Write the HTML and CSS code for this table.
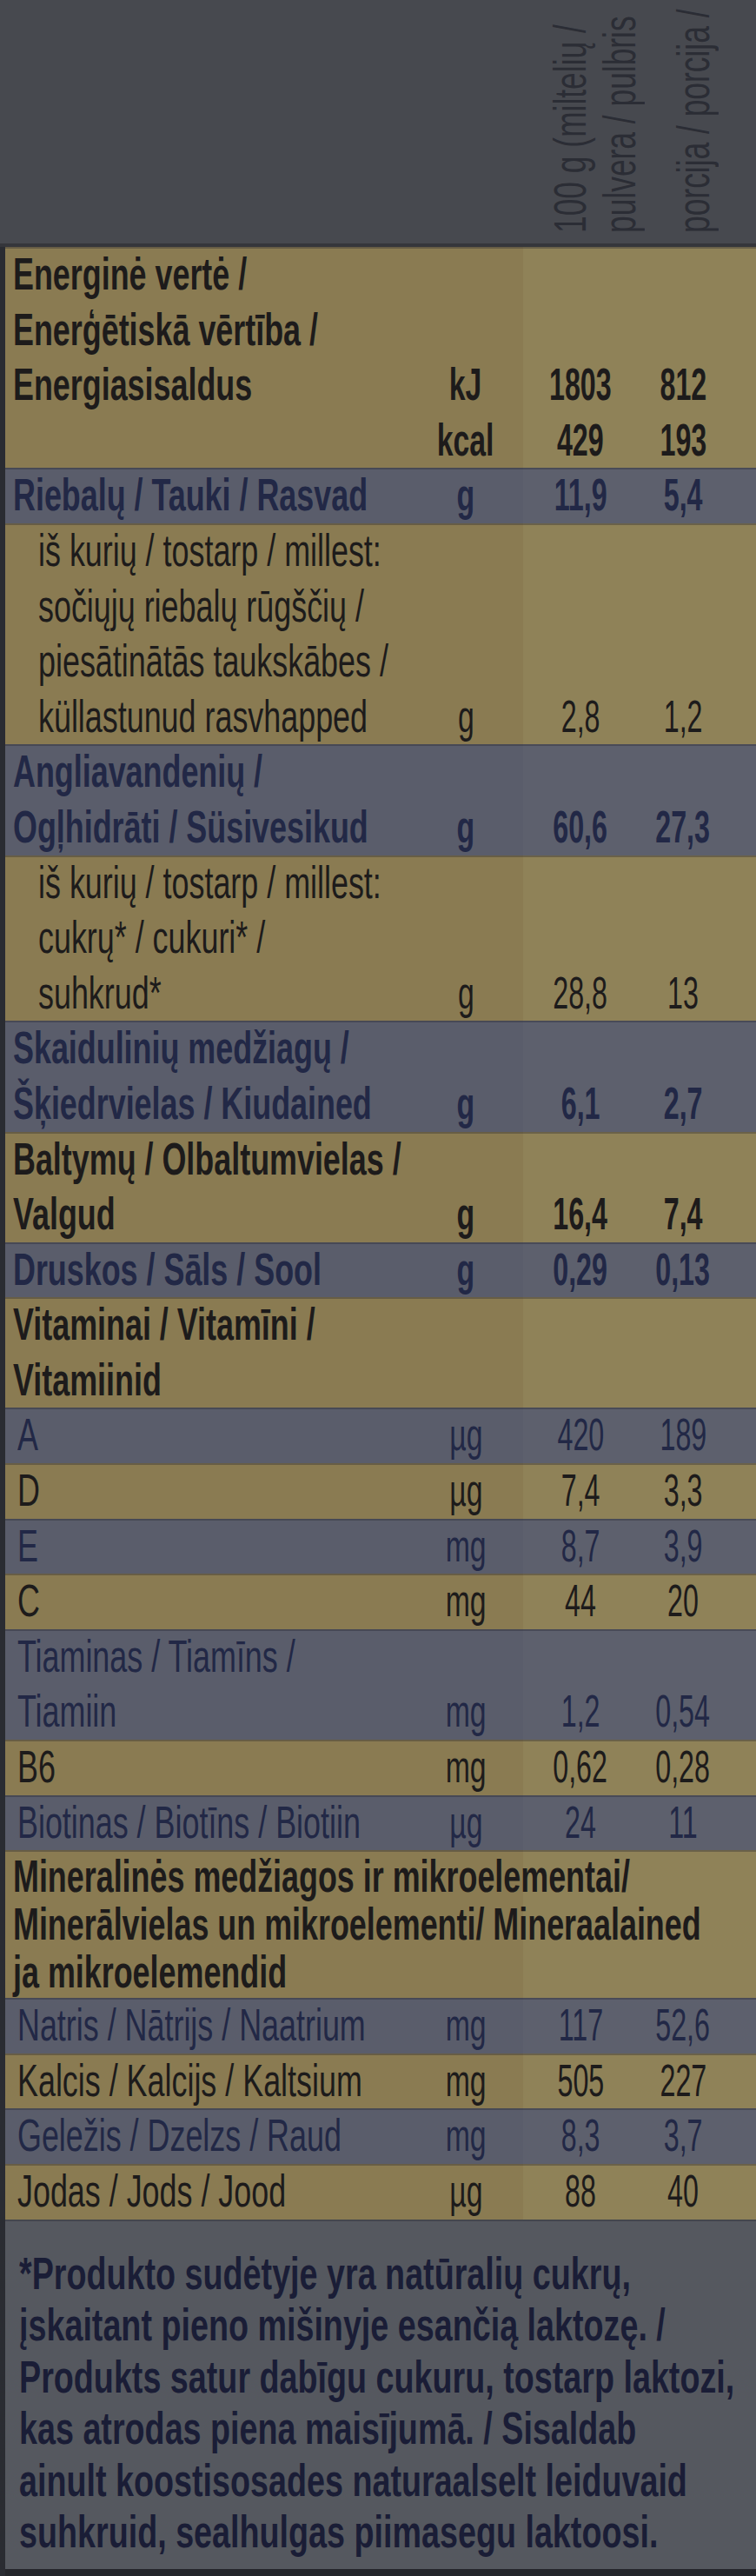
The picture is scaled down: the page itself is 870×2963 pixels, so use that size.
FILE: index.html
```html
<!DOCTYPE html>
<html lang="lt">
<head>
<meta charset="utf-8">
<title>Maistinė vertė</title>
<link rel="stylesheet" href="styles.css">
</head>
<body>
<div class="head">
  <div class="hcell hcell-1"><div class="vtext">100 g (miltelių /<br>pulvera / pulbris</div></div>
  <div class="hcell hcell-2"><div class="vtext">porcija / porcija /</div></div>
</div>
<div class="panel">
  <div class="row y bold">
    <div class="lbl pad1"><span class="t">Energinė vertė /<br>Enerģētiskā vērtība /<br>Energiasisaldus</span></div>
    <div class="u"><span class="t">kJ<br>kcal</span></div>
    <div class="v"><span class="n">1803<br>429</span></div>
    <div class="v"><span class="n">812<br>193</span></div>
  </div>
  <div class="row b bold">
    <div class="lbl"><span class="t">Riebalų / Tauki / Rasvad</span></div>
    <div class="u"><span class="t">g</span></div>
    <div class="v"><span class="n">11,9</span></div>
    <div class="v"><span class="n">5,4</span></div>
  </div>
  <div class="row y">
    <div class="lbl sub"><span class="t">iš kurių / tostarp / millest:<br>sočiųjų riebalų rūgščių /<br>piesātinātās taukskābes /<br>küllastunud rasvhapped</span></div>
    <div class="u"><span class="t">g</span></div>
    <div class="v"><span class="n">2,8</span></div>
    <div class="v"><span class="n">1,2</span></div>
  </div>
  <div class="row b bold">
    <div class="lbl"><span class="t">Angliavandenių /<br>Ogļhidrāti / Süsivesikud</span></div>
    <div class="u"><span class="t">g</span></div>
    <div class="v"><span class="n">60,6</span></div>
    <div class="v"><span class="n">27,3</span></div>
  </div>
  <div class="row y">
    <div class="lbl sub"><span class="t">iš kurių / tostarp / millest:<br>cukrų* / cukuri* /<br>suhkrud*</span></div>
    <div class="u"><span class="t">g</span></div>
    <div class="v"><span class="n">28,8</span></div>
    <div class="v"><span class="n">13</span></div>
  </div>
  <div class="row b bold">
    <div class="lbl"><span class="t">Skaidulinių medžiagų /<br>Šķiedrvielas / Kiudained</span></div>
    <div class="u"><span class="t">g</span></div>
    <div class="v"><span class="n">6,1</span></div>
    <div class="v"><span class="n">2,7</span></div>
  </div>
  <div class="row y bold">
    <div class="lbl"><span class="t">Baltymų / Olbaltumvielas /<br>Valgud</span></div>
    <div class="u"><span class="t">g</span></div>
    <div class="v"><span class="n">16,4</span></div>
    <div class="v"><span class="n">7,4</span></div>
  </div>
  <div class="row b bold">
    <div class="lbl"><span class="t">Druskos / Sāls / Sool</span></div>
    <div class="u"><span class="t">g</span></div>
    <div class="v"><span class="n">0,29</span></div>
    <div class="v"><span class="n">0,13</span></div>
  </div>
  <div class="row y bold">
    <div class="lbl"><span class="t">Vitaminai / Vitamīni /<br>Vitamiinid</span></div>
    <div class="u"></div>
    <div class="v"></div>
    <div class="v"></div>
  </div>
  <div class="row b">
    <div class="lbl"><span class="t">A</span></div>
    <div class="u"><span class="t">µg</span></div>
    <div class="v"><span class="n">420</span></div>
    <div class="v"><span class="n">189</span></div>
  </div>
  <div class="row y">
    <div class="lbl"><span class="t">D</span></div>
    <div class="u"><span class="t">µg</span></div>
    <div class="v"><span class="n">7,4</span></div>
    <div class="v"><span class="n">3,3</span></div>
  </div>
  <div class="row b">
    <div class="lbl"><span class="t">E</span></div>
    <div class="u"><span class="t">mg</span></div>
    <div class="v"><span class="n">8,7</span></div>
    <div class="v"><span class="n">3,9</span></div>
  </div>
  <div class="row y">
    <div class="lbl"><span class="t">C</span></div>
    <div class="u"><span class="t">mg</span></div>
    <div class="v"><span class="n">44</span></div>
    <div class="v"><span class="n">20</span></div>
  </div>
  <div class="row b">
    <div class="lbl"><span class="t">Tiaminas / Tiamīns /<br>Tiamiin</span></div>
    <div class="u"><span class="t">mg</span></div>
    <div class="v"><span class="n">1,2</span></div>
    <div class="v"><span class="n">0,54</span></div>
  </div>
  <div class="row y">
    <div class="lbl"><span class="t">B6</span></div>
    <div class="u"><span class="t">mg</span></div>
    <div class="v"><span class="n">0,62</span></div>
    <div class="v"><span class="n">0,28</span></div>
  </div>
  <div class="row b">
    <div class="lbl"><span class="t">Biotinas / Biotīns / Biotiin</span></div>
    <div class="u"><span class="t">µg</span></div>
    <div class="v"><span class="n">24</span></div>
    <div class="v"><span class="n">11</span></div>
  </div>
  <div class="row y bold">
    <div class="lbl full"><span class="t">Mineralinės medžiagos ir mikroelementai/<br>Minerālvielas un mikroelementi/ Mineraalained<br>ja mikroelemendid</span></div>
  </div>
  <div class="row b">
    <div class="lbl"><span class="t">Natris / Nātrijs / Naatrium</span></div>
    <div class="u"><span class="t">mg</span></div>
    <div class="v"><span class="n">117</span></div>
    <div class="v"><span class="n">52,6</span></div>
  </div>
  <div class="row y">
    <div class="lbl"><span class="t">Kalcis / Kalcijs / Kaltsium</span></div>
    <div class="u"><span class="t">mg</span></div>
    <div class="v"><span class="n">505</span></div>
    <div class="v"><span class="n">227</span></div>
  </div>
  <div class="row b">
    <div class="lbl"><span class="t">Geležis / Dzelzs / Raud</span></div>
    <div class="u"><span class="t">mg</span></div>
    <div class="v"><span class="n">8,3</span></div>
    <div class="v"><span class="n">3,7</span></div>
  </div>
  <div class="row y">
    <div class="lbl"><span class="t">Jodas / Jods / Jood</span></div>
    <div class="u"><span class="t">µg</span></div>
    <div class="v"><span class="n">88</span></div>
    <div class="v"><span class="n">40</span></div>
  </div>
  <div class="foot"><span class="t">*Produkto sudėtyje yra natūralių cukrų,<br>įskaitant pieno mišinyje esančią laktozę. /<br>Produkts satur dabīgu cukuru, tostarp laktozi,<br>kas atrodas piena maisījumā. / Sisaldab<br>ainult koostisosades naturaalselt leiduvaid<br>suhkruid, sealhulgas piimasegu laktoosi.</span></div>
</div>
</body>
</html>
```

FILE: styles.css
```css
html, body {
  margin: 0;
  padding: 0;
}

html { overflow-x: hidden; }

body {
  width: 870px;
  overflow-x: hidden;
  background: #55585f;
  font-family: "Liberation Sans", "DejaVu Sans", sans-serif;
  font-size: 52px;
  line-height: 63.6px;
  color: #1e2038;
}

/* header with rotated column titles */
.head {
  height: 280px;
  background: #47494f;
  border-bottom: 4px solid #35363b;
  overflow: hidden;
  display: grid;
  grid-template-columns: 602px 132px 136px;
  grid-template-rows: 280px;
}

.hcell-1 { grid-column: 2; }
.hcell-2 { grid-column: 3; }

.vtext {
  writing-mode: vertical-rl;
  transform: rotate(180deg) scaleY(0.68);
  white-space: nowrap;
  height: 319px;
  font-size: 52px;
  line-height: 57px;
  color: #2b2d35;
}

.hcell-1 .vtext { margin-left: 26px; }
.hcell-2 .vtext { margin-left: 36px; }

/* table */
.panel {
  border-left: 6px solid #2a2c32;
  overflow: hidden;
}

.row {
  display: grid;
  grid-template-columns: 464px 132px 132px 104px 32px;
  align-items: end;
  overflow: hidden;
  box-shadow: inset 0 2px 0 rgba(38, 38, 46, 0.35);
}

.row.y {
  background: linear-gradient(90deg, #8a7b52 0 596px, #8f8258 596px);
  color: #1d1b1b;
}

.row.b {
  background: linear-gradient(90deg, #5a5d6b 0 596px, #5d606d 596px);
  color: #222846;
}

.bold { font-weight: bold; }

.lbl {
  align-self: start;
  padding-left: 14px;
  white-space: nowrap;
  min-width: 0;
}

.bold .lbl { padding-left: 9px; }
.lbl.sub { padding-left: 38px; }
.lbl.pad1 { padding-bottom: 63.6px; }

.lbl.full {
  grid-column: 1 / -1;
  line-height: 55px;
  padding-top: 3px;
  padding-bottom: 2px;
}

.t {
  display: inline-block;
  transform: scaleX(0.69);
  transform-origin: 0 50%;
  white-space: nowrap;
}

.u {
  text-align: center;
  white-space: nowrap;
}

.u .t {
  transform: scaleX(0.65);
  transform-origin: 50% 50%;
}

.v {
  text-align: center;
  white-space: nowrap;
}

.n {
  display: inline-block;
  transform: scaleX(0.62);
  font-weight: normal;
}

.bold .n { font-weight: bold; }

.foot {
  background: #55585f;
  color: #1a1d36;
  font-weight: bold;
  line-height: 59.5px;
  padding: 33px 0 12px 16px;
  border-bottom: 8px solid #25262b;
  overflow: hidden;
  box-shadow: inset 0 2px 0 rgba(38, 38, 46, 0.35);
}

.foot .t { transform: scaleX(0.725); }
```
